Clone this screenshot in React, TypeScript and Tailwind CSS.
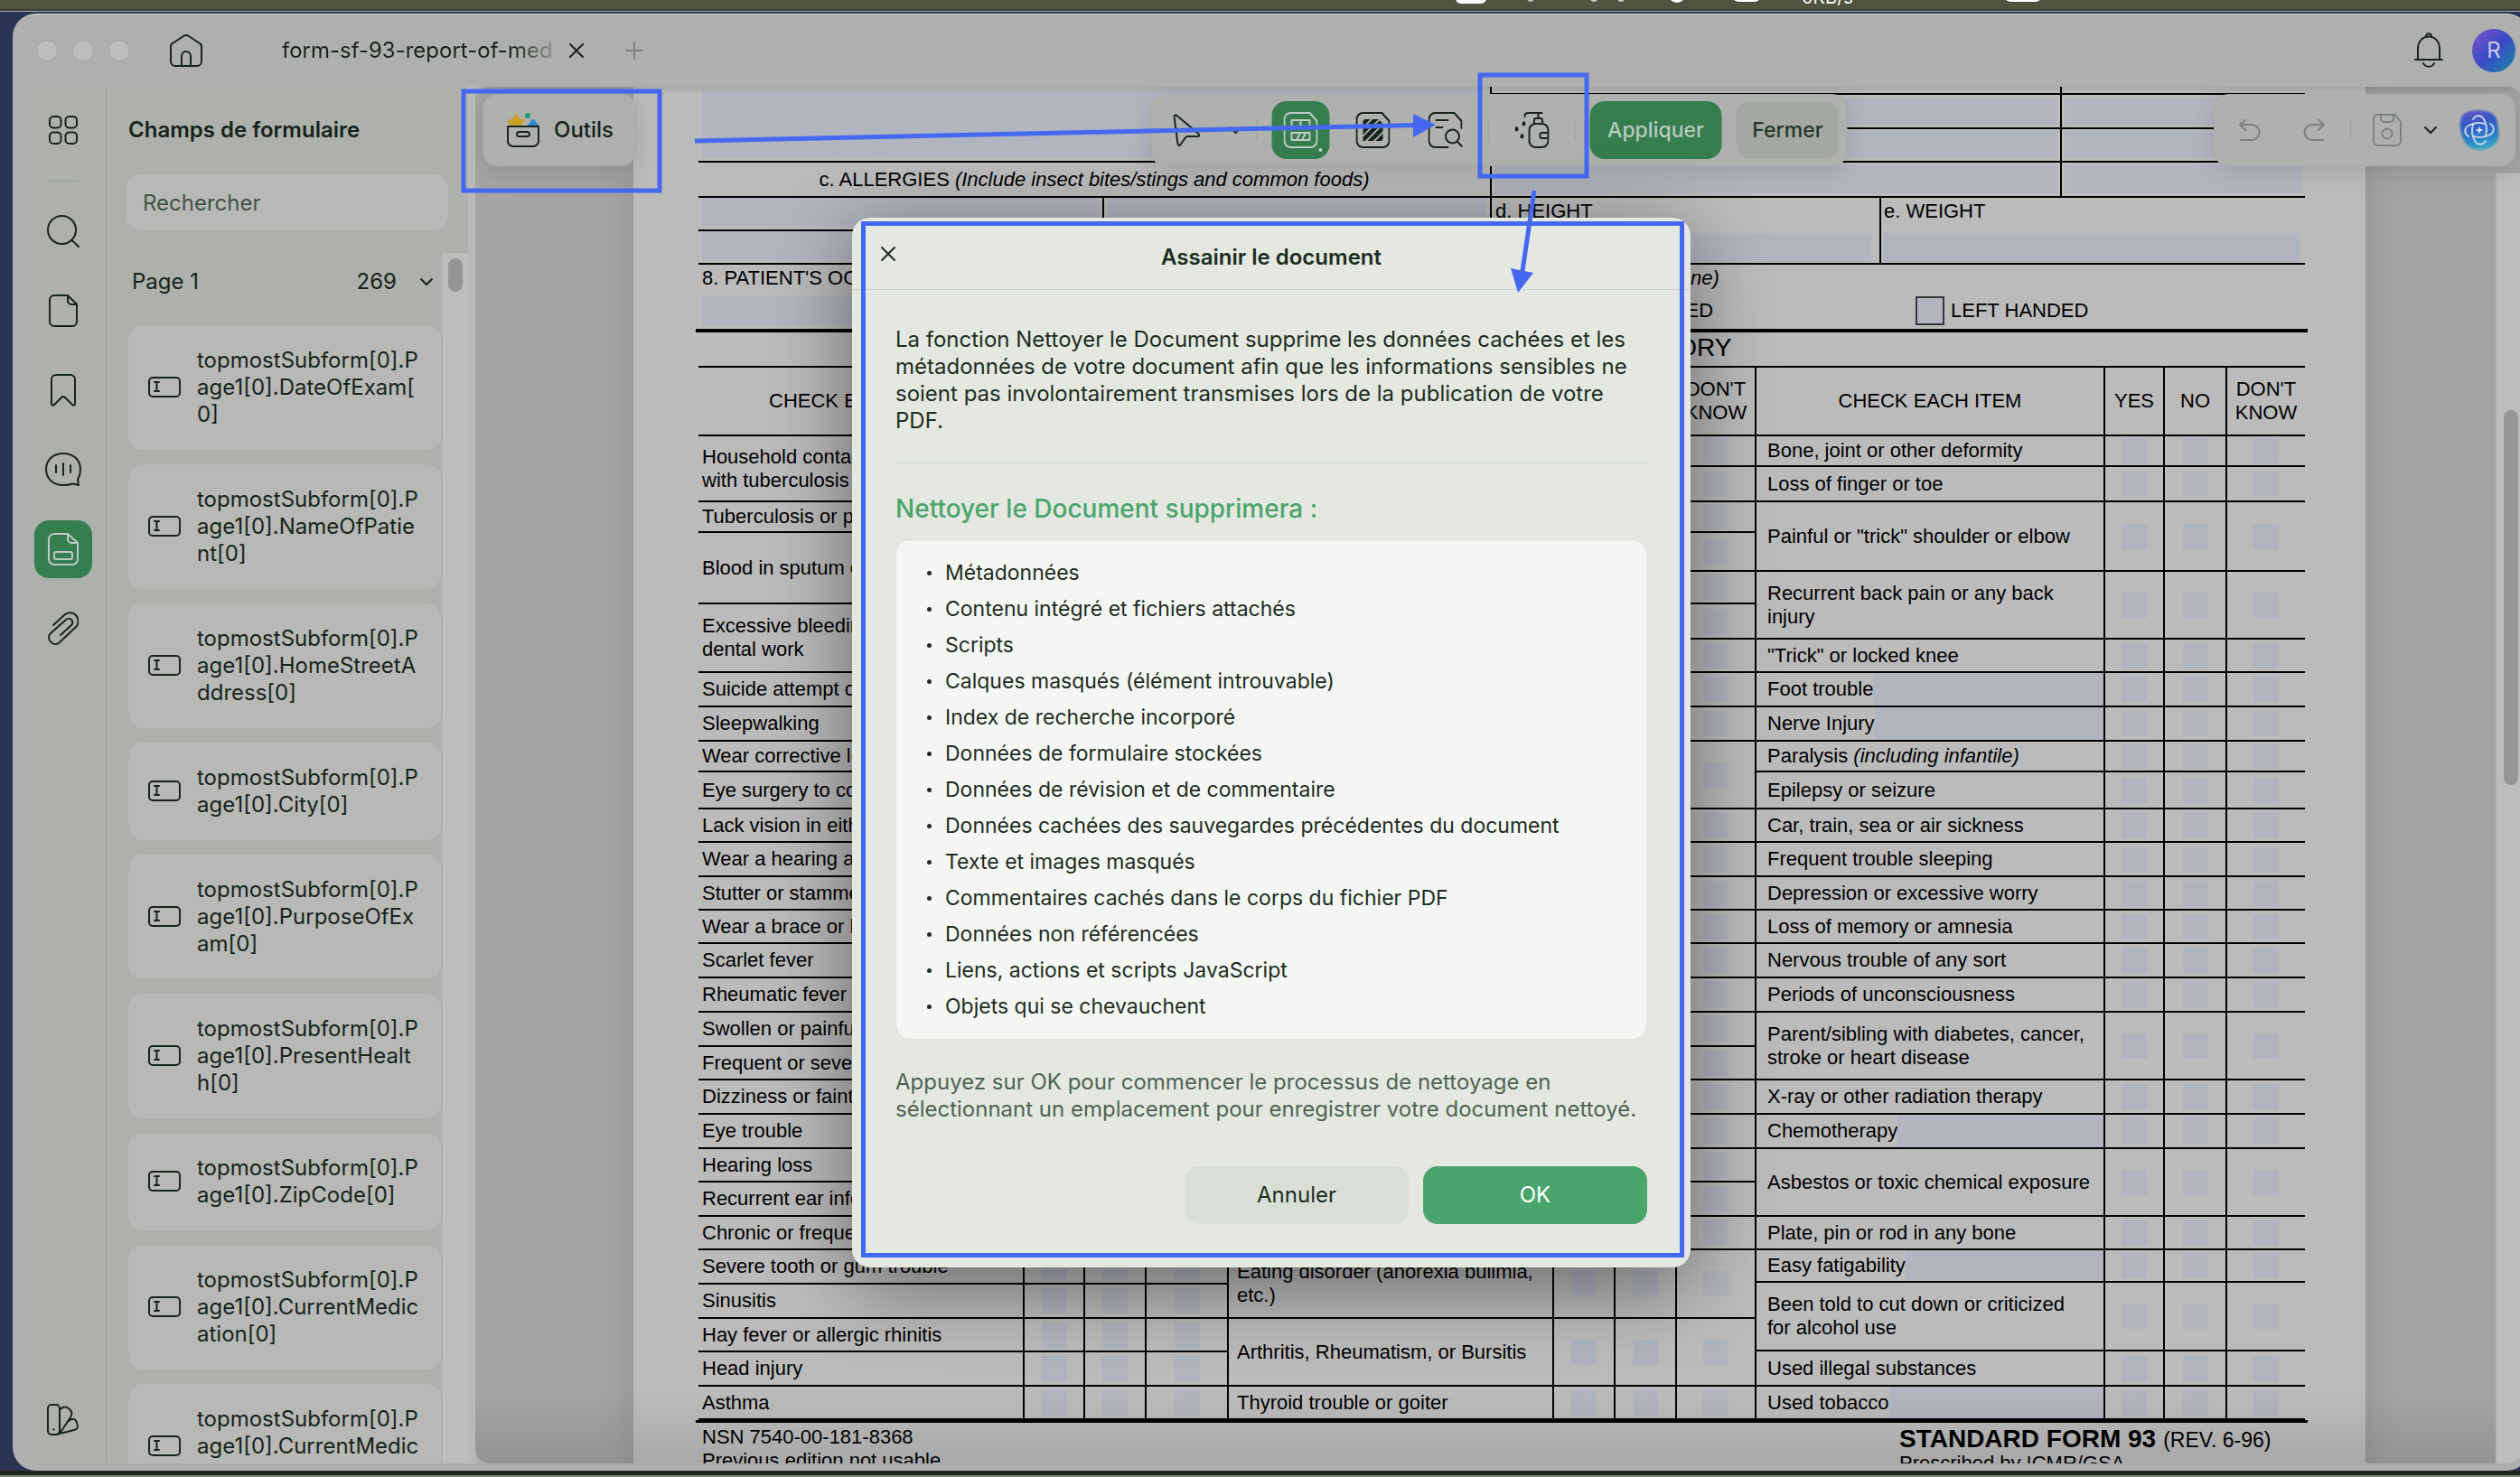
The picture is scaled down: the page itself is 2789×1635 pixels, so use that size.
import React from 'react';

type Row = { label?: string; note?: string; height: number; field?: boolean };

const formFields = [
  ['topmostSubform[0].P', 'age1[0].DateOfExam[', '0]'],
  ['topmostSubform[0].P', 'age1[0].NameOfPatie', 'nt[0]'],
  ['topmostSubform[0].P', 'age1[0].HomeStreetA', 'ddress[0]'],
  ['topmostSubform[0].P', 'age1[0].City[0]'],
  ['topmostSubform[0].P', 'age1[0].PurposeOfEx', 'am[0]'],
  ['topmostSubform[0].P', 'age1[0].PresentHealt', 'h[0]'],
  ['topmostSubform[0].P', 'age1[0].ZipCode[0]'],
  ['topmostSubform[0].P', 'age1[0].CurrentMedic', 'ation[0]'],
  ['topmostSubform[0].P', 'age1[0].CurrentMedic', 'ation[1]'],
];

const leftRows: Row[] = [
  { label: 'Household contact\nwith tuberculosis', height: 73 },
  { label: 'Tuberculosis or positive TB test', height: 34 },
  { label: 'Blood in sputum or when coughing', height: 79 },
  { label: 'Excessive bleeding after injury or\ndental work', height: 76 },
  { label: 'Suicide attempt or plans', height: 38 },
  { label: 'Sleepwalking', height: 38 },
  { label: 'Wear corrective lenses', height: 34 },
  { label: 'Eye surgery to correct vision', height: 41 },
  { label: 'Lack vision in either eye', height: 37 },
  { label: 'Wear a hearing aid', height: 38 },
  { label: 'Stutter or stammer', height: 37 },
  { label: 'Wear a brace or back support', height: 37 },
  { label: 'Scarlet fever', height: 38 },
  { label: 'Rheumatic fever', height: 38 },
  { label: 'Swollen or painful joints', height: 38 },
  { label: 'Frequent or severe headaches', height: 37 },
  { label: 'Dizziness or fainting spells', height: 38 },
  { label: 'Eye trouble', height: 38 },
  { label: 'Hearing loss', height: 37 },
  { label: 'Recurrent ear infections', height: 38 },
  { label: 'Chronic or frequent colds', height: 37 },
  { label: 'Severe tooth or gum trouble', height: 38 },
  { label: 'Sinusitis', height: 38 },
  { label: 'Hay fever or allergic rhinitis', height: 37 },
  { label: 'Head injury', height: 38 },
  { label: 'Asthma', height: 37 },
];

const middleRows: Row[] = [
  ...[34, 39, 34, 43, 36, 39, 37, 38, 38, 75, 37, 38, 37, 37, 38, 38, 38, 37, 38, 38, 37, 38, 37].map((height) => ({ height })),
  { label: 'Eating disorder (anorexia bulimia,\netc.)', height: 76 },
  { label: 'Arthritis, Rheumatism, or Bursitis', height: 75 },
  { label: 'Thyroid trouble or goiter', height: 37 },
];

const rightRows: Row[] = [
  { label: 'Bone, joint or other deformity', height: 34 },
  { label: 'Loss of finger or toe', height: 39 },
  { label: 'Painful or "trick" shoulder or elbow', height: 77 },
  { label: 'Recurrent back pain or any back\ninjury', height: 75 },
  { label: '"Trick" or locked knee', height: 37 },
  { label: 'Foot trouble', height: 38, field: true },
  { label: 'Nerve Injury', height: 38, field: true },
  { label: 'Paralysis ', note: '(including infantile)', height: 34 },
  { label: 'Epilepsy or seizure', height: 41 },
  { label: 'Car, train, sea or air sickness', height: 37 },
  { label: 'Frequent trouble sleeping', height: 38 },
  { label: 'Depression or excessive worry', height: 37 },
  { label: 'Loss of memory or amnesia', height: 37 },
  { label: 'Nervous trouble of any sort', height: 38 },
  { label: 'Periods of unconsciousness', height: 38 },
  { label: 'Parent/sibling with diabetes, cancer,\nstroke or heart disease', height: 75 },
  { label: 'X-ray or other radiation therapy', height: 38 },
  { label: 'Chemotherapy', height: 38, field: true },
  { label: 'Asbestos or toxic chemical exposure', height: 75 },
  { label: 'Plate, pin or rod in any bone', height: 37 },
  { label: 'Easy fatigability', height: 36, field: true },
  { label: 'Been told to cut down or criticized\nfor alcohol use', height: 76 },
  { label: 'Used illegal substances', height: 39 },
  { label: 'Used tobacco', height: 37, field: true },
];

const removedItems = [
  'Métadonnées',
  'Contenu intégré et fichiers attachés',
  'Scripts',
  'Calques masqués (élément introuvable)',
  'Index de recherche incorporé',
  'Données de formulaire stockées',
  'Données de révision et de commentaire',
  'Données cachées des sauvegardes précédentes du document',
  'Texte et images masqués',
  'Commentaires cachés dans le corps du fichier PDF',
  'Données non référencées',
  'Liens, actions et scripts JavaScript',
  'Objets qui se chevauchent',
];

const Icon = ({ w, h, sw = 2, children }: { w: number; h: number; sw?: number; children: React.ReactNode }) => (
  <svg width={w} height={h} viewBox={`0 0 ${w} ${h}`} fill="none" stroke="currentColor" strokeWidth={sw} strokeLinecap="round" strokeLinejoin="round" className="shrink-0">
    {children}
  </svg>
);

const Chevron = () => (
  <Icon w={14} h={10} sw={2}>
    <path d="M1 2l6 6 6-6" />
  </Icon>
);

const Cross = () => (
  <Icon w={16} h={16} sw={2}>
    <path d="M1 1l14 14M15 1L1 15" />
  </Icon>
);

const railIcons = [
  {
    name: 'Signets',
    icon: (
      <Icon w={28} h={36}>
        <path d="M1 6a5 5 0 0 1 5-5h16a5 5 0 0 1 5 5v27c0 2-1 2-3 1l-8-8q-2-2-4 0l-8 8c-2 1-3 1-3-1z" />
      </Icon>
    ),
  },
  {
    name: 'Commentaires',
    icon: (
      <Icon w={40} h={38}>
        <path d="M36 30l1 6-6-1.500C28 35.500 24 36 20 36 9 36 1 29 1 18.500S9 1 20 1s19 7 19 17.500c0 4.500-1 8-3 11.500z" />
        <path d="M12 14v8M20 12v13M28 14v8" />
      </Icon>
    ),
  },
];

const IconRail = () => (
  <nav className="flex w-24 shrink-0 flex-col items-center gap-6 border-r border-[#98a39c] pt-4 pb-4 text-[#16231b]">
    <button aria-label="Miniatures" className="flex size-16 items-center justify-center">
      <Icon w={32} h={32}>
        <rect x="1" y="1" width="12.500" height="12.500" rx="4" />
        <rect x="18.500" y="1" width="12.500" height="12.500" rx="4" />
        <rect x="1" y="18.500" width="12.500" height="12.500" rx="4" />
        <rect x="18.500" y="18.500" width="12.500" height="12.500" rx="4" />
      </Icon>
    </button>
    <div className="-mb-px h-px w-8 bg-[#94a39a]" />
    <button aria-label="Rechercher" className="flex size-16 items-center justify-center">
      <Icon w={36} h={36}>
        <circle cx="16.500" cy="16.500" r="15.500" />
        <path d="M27.500 28l7.500 7" />
      </Icon>
    </button>
    <button aria-label="Pages" className="flex size-16 items-center justify-center">
      <Icon w={32} h={36}>
        <path d="M6 1h15l10 10v19a5 5 0 0 1-5 5H6a5 5 0 0 1-5-5V6a5 5 0 0 1 5-5z" />
        <path d="M21 1v6a4 4 0 0 0 4 4h6" />
      </Icon>
    </button>
    {railIcons.map((item) => (
      <button key={item.name} aria-label={item.name} className="flex size-16 items-center justify-center">
        {item.icon}
      </button>
    ))}
    <button aria-label="Champs de formulaire" className="flex size-16 items-center justify-center rounded-2xl bg-[#347e50] text-[#c3c9c4]">
      <Icon w={34} h={36}>
        <path d="M7 1h15l11 10v18a6 6 0 0 1-6 6H7a6 6 0 0 1-6-6V7a6 6 0 0 1 6-6z" />
        <path d="M22 1v6a4 4 0 0 0 4 4h7" />
        <rect x="7" y="21" width="20" height="8" rx="2" />
      </Icon>
    </button>
    <button aria-label="Pièces jointes" className="flex size-16 items-center justify-center">
      <Icon w={34} h={38}>
        <path d="M6 15L18 4a9 9 0 0 1 13 13L13 34c-6 6-16-3-10-10L20 9c4-4 10 2 6 6L14 26" />
      </Icon>
    </button>
    <div className="flex-1" />
    <button aria-label="Thème" className="flex size-16 items-center justify-center">
      <Icon w={36} h={36}>
        <rect x="1" y="1" width="13" height="33" rx="4" />
        <path d="M14 7c4-5 8-4 11-1 3 3 3 5 1 9L14 33" />
        <path d="M24 19c5-4 8-2 9 2 2 5 1 7-3 8L10 34" />
        <path d="M7.500 28v.5" />
      </Icon>
    </button>
  </nav>
);

const FieldsPanel = () => (
  <section className="flex w-[400px] shrink-0 flex-col text-[#16231b]">
    <h2 className="flex h-24 shrink-0 items-center pl-6 text-[24px] font-semibold">Champs de formulaire</h2>
    <input
      aria-label="Rechercher"
      placeholder="Rechercher"
      className="mr-[21px] ml-[21px] h-16 shrink-0 rounded-2xl border border-[#a6b0a9] bg-[#b8b8b6] px-[18px] text-[24px] placeholder:text-[#3f5246]"
    />
    <div className="mt-6 flex min-h-0 flex-1">
      <div className="flex min-w-0 flex-1 flex-col overflow-hidden pr-[2px] pl-6">
        <button className="flex h-16 shrink-0 items-center pr-[9px] pl-1 text-[24px]">
          <span className="flex-1 text-left">Page 1</span>
          <span className="mr-[26px]">269</span>
          <Chevron />
        </button>
        <ul className="mt-4 flex flex-col gap-4">
          {formFields.map((lines, index) => (
            <li key={index} className="flex items-center rounded-2xl bg-[#b8b8b6] py-6 pl-[22px]">
              <Icon w={36} h={24}>
                <rect x="1" y="1" width="34" height="21" rx="4" />
                <path d="M7 6h5M9.500 6v10M7 16h5" />
              </Icon>
              <span className="ml-[18px] text-[24px] leading-[30px] whitespace-nowrap">
                {lines.map((line) => (
                  <span key={line} className="block">{line}</span>
                ))}
              </span>
            </li>
          ))}
        </ul>
      </div>
      <div className="w-7 shrink-0 bg-[#bdbdbd] pt-[6px]">
        <div className="mx-auto h-[37px] w-4 rounded-full bg-[#959595]" />
      </div>
    </div>
  </section>
);

const CheckTable = ({ rows, pad, title, cols }: { rows: Row[]; pad: string; title: string; cols: string[] }) => (
  <table className="w-full table-fixed border-separate border-spacing-0">
    <colgroup>
      <col />
      {cols.map((col, index) => (
        <col key={index} className={col} />
      ))}
    </colgroup>
    <thead>
      <tr className="h-[76px]">
        <th className="border-b-2 border-black font-normal whitespace-nowrap">CHECK EACH ITEM</th>
        <th className="border-b-2 border-l-2 border-black font-normal">YES</th>
        <th className="border-b-2 border-l-2 border-black font-normal">NO</th>
        <th className="border-b-2 border-l-2 border-black font-normal">DON'T KNOW</th>
      </tr>
    </thead>
    <tbody>
      {rows.map((row, index) => (
        <tr key={index}>
          <td className="border-b-2 border-black">
            <div className={`flex items-center overflow-hidden ${pad}`} style={{ height: row.height - 2 }}>
              <span className="whitespace-pre">
                {row.label}
                {row.note && <i>{row.note}</i>}
              </span>
              {row.field && <input aria-label={row.label} className="h-full min-w-0 flex-1 bg-[#b1b5bf]" />}
            </div>
          </td>
          {['YES', 'NO', "DON'T KNOW"].map((answer) => (
            <td key={answer} className="border-b-2 border-l-2 border-black">
              <input type="checkbox" aria-label={`${title} ${index + 1} ${answer}`} className="mx-auto block size-7 appearance-none bg-[#b0b4be]" />
            </td>
          ))}
        </tr>
      ))}
    </tbody>
  </table>
);

const Field = ({ label }: { label: string }) => <input aria-label={label} className="block h-full w-full min-w-0 bg-[#b1b5bf]" />;

const FormPage = () => (
  <div className="mr-[174px] ml-[175px] bg-[#bbbbbb] pr-[67px] pl-[72px] font-['Liberation_Sans',Arial,sans-serif] text-[22px] leading-[26px] text-black shadow-[0_0_40px_rgba(0,0,0,0.12)]">
    {/* Medications and allergies */}
    <div className="grid grid-cols-[876fr_902fr]">
      <div>
        <div className="h-[84px] border-b-2 border-black pt-1 pr-2 pb-1 pl-1">
          <Field label="Medications" />
        </div>
        <div className="flex h-[39px] items-center justify-center border-b-2 border-black whitespace-pre">
          c. ALLERGIES <i>(Include insect bites/stings and common foods)</i>
        </div>
      </div>
      <div className="grid grid-cols-[632fr_270fr] grid-rows-[9px_38px_37px_39px] border-l-2 border-black">
        {['a', 'b', 'c', 'd'].map((line) => (
          <React.Fragment key={line}>
            <div className="border-r-2 border-b-2 border-black p-[3px]">
              <Field label={`Medication ${line}`} />
            </div>
            <div className="border-b-2 border-black p-[3px]">
              <Field label={`Dose ${line}`} />
            </div>
          </React.Fragment>
        ))}
      </div>
    </div>

    {/* Height and weight */}
    <div className="grid grid-cols-[876fr_431fr_471fr]">
      <div className="grid grid-cols-[449fr_427fr] grid-rows-2">
        {[1, 2, 3, 4].map((cell) => (
          <div key={cell} className="h-[37px] border-b-2 border-black p-1 pt-0 odd:border-r-2">
            <Field label={`Allergy ${cell}`} />
          </div>
        ))}
      </div>
      <label className="border-b-2 border-l-2 border-black pr-[9px] pl-1">
        <span className="block h-[39px] pt-[2px]">d. HEIGHT</span>
        <input className="block h-8 w-full bg-[#b1b5bf]" />
      </label>
      <label className="border-b-2 border-l-2 border-black pr-[5px] pl-[3px]">
        <span className="block h-[39px] pt-[2px]">e. WEIGHT</span>
        <input className="block h-8 w-full bg-[#b1b5bf]" />
      </label>
    </div>

    {/* Occupation and handedness */}
    <div className="-mx-[3px] grid h-[75px] grid-cols-[879fr_905fr] border-b-4 border-black">
      <label className="pr-2 pl-[7px]">
        <span className="block h-[35px] pt-[2px]">8. PATIENT'S OCCUPATION</span>
        <input className="block h-8 w-full bg-[#b1b5bf]" />
      </label>
      <div className="pl-[6px]">
        <div className="h-[35px] pt-[2px] whitespace-pre">
          9. ARE YOU <i>(Check one)</i>
        </div>
        <div className="flex h-8 items-center">
          <label className="flex w-[465px] items-center gap-2 pl-[34px]">
            <input type="checkbox" className="size-8 appearance-none border-2 border-black bg-[#b1b5bf]" />
            RIGHT HANDED
          </label>
          <label className="flex items-center gap-[7px]">
            <input type="checkbox" className="size-8 appearance-none border-2 border-black/70 bg-[#b1b5bf]" />
            LEFT HANDED
          </label>
        </div>
      </div>
    </div>

    <div className="flex h-[39px] items-center justify-center border-b-2 border-black pb-1 text-[28px]">9. PAST/CURRENT MEDICAL HISTORY</div>

    <div className="grid grid-cols-[585fr_586fr_607fr]">
      <CheckTable rows={leftRows} pad="pl-1" title="A" cols={['w-[67px]', 'w-[68px]', 'w-[91px]']} />
      <div className="border-x-2 border-black">
        <CheckTable rows={middleRows} pad="pl-[9px]" title="B" cols={['w-[68px]', 'w-[68px]', 'w-[88px]']} />
      </div>
      <CheckTable rows={rightRows} pad="pl-3" title="C" cols={['w-[66px]', 'w-[69px]', 'w-[88px]']} />
    </div>
    <div className="-mx-[3px] h-[3px] bg-black" />

    <div className="flex justify-between pt-[3px]">
      <div className="pl-1">
        NSN 7540-00-181-8368
        <br />
        Previous edition not usable
      </div>
      <div className="w-[449px]">
        <div className="flex items-baseline gap-2 pt-[2px] text-[23px]">
          <b className="text-[28px]">STANDARD FORM 93</b> (REV. 6-96)
        </div>
        <div>Prescribed by ICMR/GSA</div>
      </div>
    </div>
  </div>
);

const toolPanel = 'absolute top-2 z-10 flex h-20 items-center rounded-2xl border border-[#a6ada6] bg-[#afb1ae] shadow-[0_6px_30px_rgba(0,0,0,0.12)]';

const ToolsButton = () => (
  <button className={`${toolPanel} left-2 gap-4 pr-6 pl-[26px] text-[24px] font-medium text-[#16231b]`}>
    <svg width="36" height="40" viewBox="0 0 36 40" fill="none">
      <path d="M10 1l3.500 6 6.500 1.500-3 5v1.500H3L1 9l6-2z" fill="#c9a227" />
      <circle cx="23" cy="4" r="3" fill="#1f9c78" />
      <path d="M23 15l4-6q2-2 4 0l4 6z" fill="#2a88cc" />
      <path d="M1 16h34v16a6 6 0 0 1-6 6H7a6 6 0 0 1-6-6z" stroke="#1b2320" strokeWidth="2" />
      <rect x="11" y="22" width="14" height="5" rx="2.500" stroke="#1b2320" strokeWidth="2" />
    </svg>
    Outils
  </button>
);

const EditToolbar = () => (
  <div className={`${toolPanel} left-1/2 -translate-x-1/2 gap-4 pr-2 text-[#16231b]`}>
    <div className="flex w-[100px] items-center gap-8 pl-6">
      <button aria-label="Sélection">
        <Icon w={30} h={36}>
          <path d="M1 3c0-2 2-2 3-1l24 20c1 2 1 3-1 3H16c-1 0-2 0-3 2l-5 7c-1 2-3 1-3-1z" />
        </Icon>
      </button>
      <button aria-label="Options de sélection">
        <Chevron />
      </button>
    </div>
    <div className="h-6 w-px bg-[#99a39c]" />
    <button aria-label="Zone de caviardage" className="relative flex size-16 items-center justify-center rounded-2xl bg-[#347e50] text-[#c3c9c4]">
      <Icon w={38} h={40}>
        <path d="M8 1h21l8 9v22a7 7 0 0 1-7 7H8a7 7 0 0 1-7-7V8a7 7 0 0 1 7-7z" />
        <path d="M9 14V9h20v5M19 9v6M9 23h20v8H9zM15 30l3-6M21 30l3-6" />
      </Icon>
      <span className="absolute right-2 bottom-2 size-1 rounded-full bg-[#c3c9c4]" />
    </button>
    <button aria-label="Caviarder" className="flex size-16 items-center justify-center">
      <Icon w={38} h={40}>
        <clipPath id="hatch">
          <path d="M8 8h17l5 5v19H8z" />
        </clipPath>
        <path d="M8 1h21l8 9v22a7 7 0 0 1-7 7H8a7 7 0 0 1-7-7V8a7 7 0 0 1 7-7z" />
        <path d="M4 17L20 1M4 26L30 0M4 35L36 3M12 36L38 10M21 36L38 19" strokeWidth="4.500" strokeLinecap="butt" clipPath="url(#hatch)" />
      </Icon>
    </button>
    <button aria-label="Rechercher et caviarder" className="flex size-16 items-center justify-center">
      <Icon w={38} h={40}>
        <path d="M22 39H8a7 7 0 0 1-7-7V8a7 7 0 0 1 7-7h21l8 9v8M9 9h13M9 17h7" />
        <circle cx="27" cy="27" r="7.500" />
        <path d="M32.500 33l5 5" />
      </Icon>
    </button>
    <div className="-ml-px h-6 w-px bg-[#99a39c]" />
    <button aria-label="Assainir le document" className="flex size-16 items-center justify-center">
      <Icon w={38} h={40}>
        <path d="M11 5c0-3 1-4 4-4h15M26 1v6M21.500 13V9q0-2 2-2h5q2 0 2 2v4" />
        <rect x="16" y="13" width="21" height="26" rx="7" />
        <path d="M37 23h-7q-2 0-2 2v2q0 2 2 2h7" />
        <path d="M10 11c4 4-4 5 0 0zM2 17c4 4-4 5 0 0zM8 25c4 4-4 5 0 0z" fill="currentColor" />
      </Icon>
    </button>
    <div className="-ml-px h-6 w-px bg-[#99a39c]" />
    <button className="h-16 w-[146px] rounded-2xl bg-[#347e50] text-[23px] font-medium text-[#bcc9bf]">Appliquer</button>
    <button className="h-16 w-[114px] rounded-2xl bg-[#a3a9a0] text-[23px] font-medium text-[#26342b]">Fermer</button>
  </div>
);

const HistoryToolbar = () => (
  <div className={`${toolPanel} right-2 pr-[15px] pl-[27px] text-[#7c817d]`}>
    <button aria-label="Annuler la modification">
      <Icon w={24} h={24}>
        <path d="M7 1L1 6l6 6M1 6h13a8 8 0 0 1 0 17H2" />
      </Icon>
    </button>
    <button aria-label="Rétablir" className="ml-[47px]">
      <Icon w={24} h={24}>
        <path d="M17 1l6 5-6 6M23 6H10a8 8 0 0 0 0 17h12" />
      </Icon>
    </button>
    <div className="ml-7 h-6 w-px bg-[#99a39c]" />
    <button aria-label="Enregistrer" className="ml-6">
      <Icon w={32} h={36}>
        <path d="M6 1h19l6 8v21a5 5 0 0 1-5 5H6a5 5 0 0 1-5-5V6a5 5 0 0 1 5-5zM9 1v4a4 4 0 0 0 4 4h6a4 4 0 0 0 4-4V1" />
        <circle cx="16" cy="22" r="5.500" />
      </Icon>
    </button>
    <button aria-label="Options d'enregistrement" className="ml-[25px] text-[#16231b]">
      <Chevron />
    </button>
    <button aria-label="Assistant IA" className="ml-[23px]">
      <svg width="48" height="48" viewBox="0 0 48 48" fill="none">
        <defs>
          <linearGradient id="ai" x1="0.300" y1="0" x2="0.500" y2="1">
            <stop offset="0" stopColor="#5f57c4" />
            <stop offset="0.350" stopColor="#3159c6" />
            <stop offset="0.700" stopColor="#2a7fc9" />
            <stop offset="1" stopColor="#35a9c4" />
          </linearGradient>
          <filter id="glow" x="-20%" y="-20%" width="140%" height="140%">
            <feGaussianBlur stdDeviation="1.200" />
          </filter>
        </defs>
        <path d="M3 14C4 5 12 2 22 2c12 0 21 3 22 14 2 10 3 18-3 24-8 7-24 8-31 0C5 34 2 24 3 14z" fill="url(#ai)" filter="url(#glow)" />
        <g stroke="#c6d0e2" strokeWidth="2" strokeLinecap="round">
          <path d="M17 12c3-5 9-5 12 0 3 5 4 11 2 18" />
          <path d="M36 17c5 3 5 9 0 12-5 3-11 4-18 2" />
          <path d="M31 36c-3 5-9 5-12 0-3-5-4-11-2-18" />
          <path d="M12 31c-5-3-5-9 0-12 5-3 11-4 18-2" />
        </g>
        <path d="M24 19.500l1.300 3.200 3.200 1.300-3.200 1.300-1.300 3.200-1.300-3.200-3.200-1.300 3.200-1.300z" fill="#d5dcea" />
      </svg>
    </button>
  </div>
);

const TitleBar = () => (
  <header className="flex h-20 shrink-0 items-center pr-4 pl-[26px] text-[#16231b]">
    <div className="flex gap-4">
      <span className="size-6 rounded-full border border-[#a3a4a4] bg-[#bdbdbd]" />
      <span className="size-6 rounded-full border border-[#a3a4a4] bg-[#bdbdbd]" />
      <span className="size-6 rounded-full border border-[#a3a4a4] bg-[#bdbdbd]" />
    </div>
    <button aria-label="Accueil" className="ml-11">
      <Icon w={36} h={36}>
        <path d="M1 13q0-2 2-3L15 2q3-2 6 0l12 8q2 1 2 3v17a5 5 0 0 1-5 5H6a5 5 0 0 1-5-5zM13 35V24a5 5 0 0 1 10 0v11" />
      </Icon>
    </button>
    <div className="ml-[34px] flex h-16 w-[408px] items-center rounded-2xl bg-[#adb0ac] pl-[54px]">
      <span className="w-[300px] overflow-hidden bg-gradient-to-r from-[#16231b] from-85% to-[#16231b]/20 bg-clip-text text-[24px] whitespace-nowrap text-transparent">
        form-sf-93-report-of-med
      </span>
      <button aria-label="Fermer l'onglet" className="ml-[18px]">
        <Cross />
      </button>
    </div>
    <button aria-label="Nouvel onglet" className="ml-[26px] text-[#7f8280]">
      <Icon w={20} h={20}>
        <path d="M10 1v18M1 10h18" />
      </Icon>
    </button>
    <div className="flex-1" />
    <button aria-label="Notifications" className="mr-8">
      <Icon w={32} h={40}>
        <path d="M1 30h30M4 30V18C4 0 28 0 28 18v12M13 5c0-5 6-5 6 0M10 34c2 5 10 5 12 0" />
      </Icon>
    </button>
    <button className="flex size-12 items-center justify-center rounded-full bg-gradient-to-br from-[#7b52c8] via-[#3a49c8] to-[#0d86a0] text-[24px] text-[#c9cbe6]">R</button>
  </header>
);

const SanitizeDialog = () => (
  <div role="dialog" aria-labelledby="dialog-title" className="relative w-[928px] rounded-[20px] bg-[#e4e8e1] text-[24px] leading-[30px] text-[#1d2c22] shadow-[0_20px_90px_rgba(0,0,0,0.45)]">
    <div className="flex h-20 items-center border-b border-[#c6d4c9] px-8">
      <button aria-label="Fermer">
        <Cross />
      </button>
      <h1 id="dialog-title" className="flex-1 pt-2 pr-4 text-center font-semibold">Assainir le document</h1>
    </div>
    <div className="px-12 pt-10 pb-12">
      <p className="whitespace-pre">
        {'La fonction Nettoyer le Document supprime les données cachées et les\nmétadonnées de votre document afin que les informations sensibles ne\nsoient pas involontairement transmises lors de la publication de votre\nPDF.'}
      </p>
      <div className="mt-[31px] border-b border-[#c9d6cc]" />
      <h2 className="mt-8 mb-4 text-[28px] leading-9 font-medium text-[#49a56c]">Nettoyer le Document supprimera :</h2>
      <ul className="rounded-2xl border border-[#dce2da] bg-[#f4f6f3] py-4 pl-[34px] text-[23px] leading-10">
        {removedItems.map((item) => (
          <li key={item} className="flex items-center">
            <span className="mr-[15px] size-[5px] rounded-full bg-[#1d2c22]" />
            {item}
          </li>
        ))}
      </ul>
      <p className="mt-8 whitespace-pre text-[#4f6355]">
        {'Appuyez sur OK pour commencer le processus de nettoyage en\nsélectionnant un emplacement pour enregistrer votre document nettoyé.'}
      </p>
      <div className="mt-12 flex justify-end gap-4">
        <button className="h-16 w-[248px] rounded-2xl bg-[#d9dfd7]">Annuler</button>
        <button className="h-16 w-[248px] rounded-2xl bg-[#49a56c] text-white">OK</button>
      </div>
    </div>
    <div className="pointer-events-none absolute top-1 right-[7px] bottom-[11px] left-[10px] border-[5px] border-[#4468f0]" />
  </div>
);

const Annotations = () => (
  <svg className="pointer-events-none absolute inset-0 z-30 h-full w-full" fill="none" stroke="#4468f0" strokeWidth="5">
    <rect x="513" y="101" width="217" height="110" />
    <rect x="1638" y="83" width="118" height="112" />
    <path d="M769 156L1566 138.500" />
    <path d="M1698 211L1685 300" />
    <path d="M1564 126l25 12-25 14zM1672 297l25 5-17 22z" fill="#4468f0" stroke="none" />
  </svg>
);

const App = () => {
  return (
    <div className="relative flex h-screen flex-col overflow-hidden bg-[#2b3553] font-[Inter,'Noto_Sans',sans-serif]">
      {/* System menu bar */}
      <div className="flex h-[10px] shrink-0 items-end overflow-hidden bg-[#4f5340] pl-[1611px] text-[20px] leading-none text-white">
        <span className="mr-[45px] mb-[6px] h-5 w-[34px] shrink-0 rounded-md bg-white" />
        <span className="mr-[62px] mb-2 h-3 w-2 shrink-0 rounded-full bg-white/60" />
        <span className="mr-[22px] mb-2 size-2 shrink-0 rounded-full bg-white/70" />
        <span className="mr-[48px] mb-2 size-2 shrink-0 rounded-full bg-white/70" />
        <span className="mr-[52px] mb-[7px] size-5 shrink-0 rounded-full bg-white" />
        <span className="mr-[46px] mb-[8px] h-5 w-[30px] shrink-0 rounded-md bg-white" />
        <span className="mr-[168px] mb-[3px]">0KB/s</span>
        <span className="mb-2 h-5 w-10 shrink-0 rounded-md bg-white" />
      </div>
      <div className="h-[2px] shrink-0 bg-[#3b3f38]" />
      <div className="h-px shrink-0 bg-[#a2a9b5]" />

      {/* Application window, its right edge runs past the screen */}
      <div className="relative mt-[2px] mr-[-11px] ml-[14px] flex min-h-0 flex-1 flex-col rounded-[26px] border-t border-[#d5d5d5] bg-[#aeb0af]">
        <TitleBar />
        <div className="mr-2 mb-2 ml-2 flex min-h-0 flex-1 overflow-hidden rounded-[16px] bg-[#aeb0ac]">
          <IconRail />
          <FieldsPanel />
          <div className="w-2 shrink-0 bg-[#b9b9b9]" />
          <main className="relative min-w-0 flex-1 overflow-hidden rounded-2xl bg-[#a4a4a4]">
            <FormPage />
            <ToolsButton />
            <EditToolbar />
            <HistoryToolbar />
            <div className="absolute inset-x-0 top-0 h-2 bg-gradient-to-b from-black/10 to-transparent" />
            <div className="absolute inset-x-0 bottom-0 h-20 bg-gradient-to-t from-black/10 to-transparent" />
            <div className="absolute top-24 right-0 bottom-0 w-[30px] border-l border-[#b0b0b0] bg-[#bdbdbd] pt-[262px]">
              <div className="ml-2 h-[415px] w-4 rounded-full bg-[#959595]" />
            </div>
          </main>
        </div>
        <div className="absolute inset-0 z-20 flex items-center justify-center">
          <SanitizeDialog />
        </div>
      </div>
      <div className="h-[7px] shrink-0 border-b-2 border-[#7d8f76] bg-[#23261c]" />
      <Annotations />
    </div>
  );
};

export default App;
